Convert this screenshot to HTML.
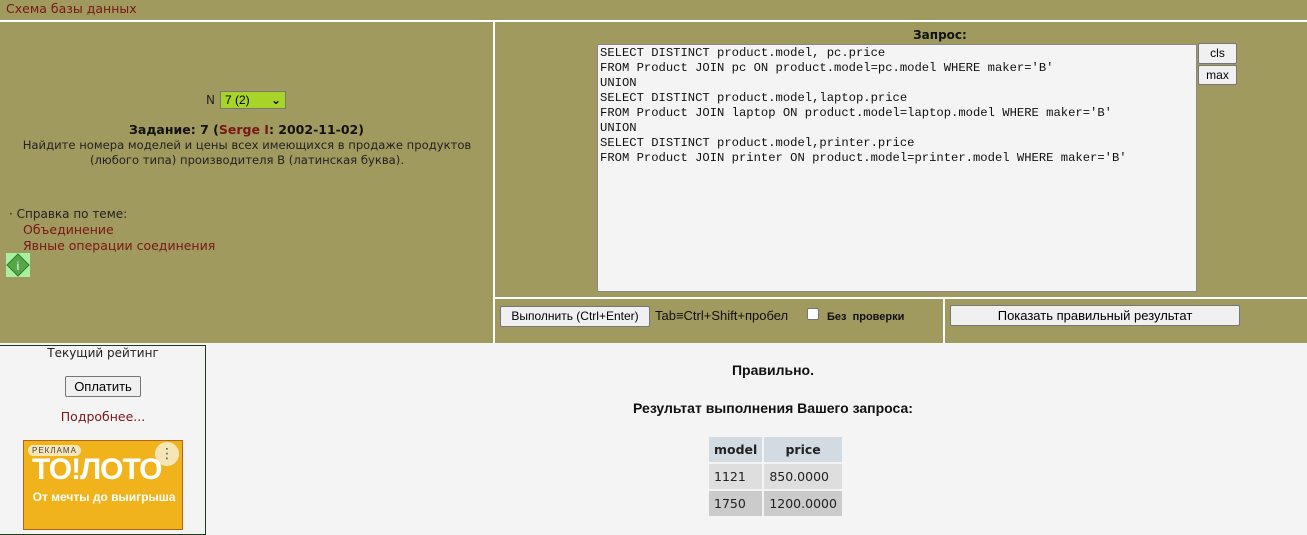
<!DOCTYPE html>
<html><head><meta charset="utf-8"><style>
body{margin:0;width:1307px;height:530px;overflow:hidden;background:#f4f4f4;font-family:"Liberation Sans","DejaVu Sans",sans-serif;position:relative}
.a{position:absolute}
.ol{background:#a09a5f}
.dv{font-family:"DejaVu Sans",sans-serif}
.mono{font-family:"Liberation Mono",monospace;font-size:12.2px;line-height:15px;white-space:pre;color:#111}
.btn{position:absolute;background:#f0f0f0;border:1px solid #767676;border-radius:2px;font-size:12px;color:#000;text-align:center;box-sizing:border-box}
.t{font-size:13px;color:#111}
a,.lnk{color:#7a1616;text-decoration:none}
td{padding:0 5px;font-size:13px;height:25px}
</style></head><body>
<div class="a ol" style="left:0;top:0;width:1307px;height:20px"></div>
<div class="a dv" style="left:6px;top:1px;font-size:12.5px;color:#7a1616">Схема базы данных</div>
<div class="a" style="left:0;top:20px;width:1307px;height:2px;background:#fff"></div>
<div class="a ol" style="left:0;top:22px;width:493px;height:321px"></div>
<div class="a" style="left:493px;top:22px;width:2px;height:321px;background:#fff"></div>
<div class="a ol" style="left:495px;top:22px;width:812px;height:275px"></div>
<div class="a" style="left:495px;top:297px;width:812px;height:2px;background:#fff"></div>
<div class="a ol" style="left:495px;top:299px;width:448px;height:44px"></div>
<div class="a" style="left:943px;top:299px;width:2px;height:44px;background:#fff"></div>
<div class="a ol" style="left:945px;top:299px;width:362px;height:44px"></div>

<div class="a dv" style="left:206px;top:93px;font-size:12px;color:#222">N</div>
<div class="a" style="left:220px;top:91px;width:66px;height:18px;background:#a8d42a;border:1px solid #777;box-sizing:border-box;font-size:12px;padding-left:4px;line-height:16px">7 (2)<span style="position:absolute;right:4px;top:0;font-weight:bold">⌄</span></div>
<div class="a dv" style="left:0;width:493px;top:122px;text-align:center;font-weight:bold;font-size:12.5px;color:#111">Задание: 7 (<span class="lnk">Serge I</span>: 2002-11-02)</div>
<div class="a dv" style="left:0;width:494px;top:138px;text-align:center;font-size:11.6px;line-height:15px;color:#222">Найдите номера моделей и цены всех имеющихся в продаже продуктов<br>(любого типа) производителя B (латинская буква).</div>
<div class="a dv" style="left:9px;top:206px;font-size:12px;line-height:16px;color:#222">· Справка по теме:</div>
<div class="a dv" style="left:23px;top:222px;font-size:12.5px;line-height:16px;color:#7a1616">Объединение<br>Явные операции соединения</div>
<div class="a" style="left:6px;top:253px;width:24px;height:24px;background:#a8f0a0"><svg width="24" height="24"><polygon points="12,1 23,12 12,23 1,12" fill="#55a845" stroke="#2d7a2d"/><text x="12" y="17" font-size="12" text-anchor="middle" fill="#fff">i</text></svg></div>

<div class="a dv" style="left:495px;width:890px;top:28px;text-align:center;font-weight:bold;font-size:12px;color:#111">Запрос:</div>
<div class="a" style="left:597px;top:44px;width:600px;height:248px;background:#f4f4f4;border:1px solid #888;box-sizing:border-box"></div>
<div class="a mono" style="left:600px;top:46px">SELECT DISTINCT product.model, pc.price
FROM Product JOIN pc ON product.model=pc.model WHERE maker='B'
UNION
SELECT DISTINCT product.model,laptop.price
FROM Product JOIN laptop ON product.model=laptop.model WHERE maker='B'
UNION
SELECT DISTINCT product.model,printer.price
FROM Product JOIN printer ON product.model=printer.model WHERE maker='B'</div>
<div class="btn" style="left:1198px;top:43px;width:39px;height:21px;line-height:19px">cls</div>
<div class="btn" style="left:1198px;top:65px;width:39px;height:20px;line-height:18px">max</div>

<div class="btn" style="left:500px;top:306px;width:150px;height:21px;line-height:19px;overflow:hidden;white-space:nowrap">Выполнить (Ctrl+Enter)</div>
<div class="a" style="left:655px;top:308px;font-size:13px;color:#111">Tab≡Ctrl+Shift+пробел</div>
<div class="a" style="left:807px;top:308px;width:12px;height:12px;background:#fff;border:1px solid #777;border-radius:2px;box-sizing:border-box"></div>
<div class="a" style="left:827px;top:311px;font-size:11px;font-weight:bold;color:#111">Без&nbsp; проверки</div>
<div class="btn" style="left:950px;top:305px;width:290px;height:21px;line-height:19px;font-size:13px">Показать правильный результат</div>

<div class="a" style="left:0;top:345px;width:206px;height:190px;border:1px solid #1c3a1c;border-left:none;box-sizing:border-box"></div>
<div class="a dv" style="left:0;width:206px;top:346px;text-align:center;font-size:12px;color:#222">Текущий рейтинг</div>
<div class="btn" style="left:65px;top:376px;width:76px;height:21px;line-height:19px;font-size:13px">Оплатить</div>
<div class="a dv" style="left:0;width:206px;top:409px;text-align:center;font-size:12.5px;color:#7a1616">Подробнее...</div>
<div class="a" style="left:23px;top:440px;width:160px;height:90px;background:#f0b31c;border:1px solid #b5621a;box-sizing:border-box;overflow:hidden">
<div class="a" style="left:4px;top:4px;background:#f6e6b6;border-radius:6px;font-size:8px;padding:1px 4px;color:#444;letter-spacing:1px">РЕКЛАМА</div>
<div class="a" style="left:131px;top:1px;width:24px;height:24px;border-radius:12px;background:#f6e6b6;text-align:center;font-size:14px;line-height:22px;color:#555">⋮</div>
<div class="a" style="left:8px;top:12px;font-size:30px;font-weight:bold;color:#fff;letter-spacing:-1px">TO!ЛОТО</div>
<div class="a" style="left:0;width:160px;top:49px;text-align:center;font-size:12px;font-weight:bold;color:#fff">От мечты до выигрыша</div>
</div>

<div class="a" style="left:206px;width:1134px;top:362px;text-align:center;font-size:14px;font-weight:bold;color:#111">Правильно.</div>
<div class="a" style="left:206px;width:1134px;top:400px;text-align:center;font-size:14px;font-weight:bold;color:#111">Результат выполнения Вашего запроса:</div>
<table class="a dv" style="left:707px;top:435px;border-spacing:2px;color:#222">
<tr style="background:#d2dae2;font-weight:bold"><td style="width:40px;text-align:center;font-size:12.5px">model</td><td style="width:64px;text-align:center;font-size:12.5px">price</td></tr>
<tr style="background:#dedede"><td style="font-size:12.5px">1121</td><td style="font-size:12.5px">850.0000</td></tr>
<tr style="background:#cbcbcb"><td style="font-size:12.5px">1750</td><td style="font-size:12.5px">1200.0000</td></tr>
</table>
</body></html>
